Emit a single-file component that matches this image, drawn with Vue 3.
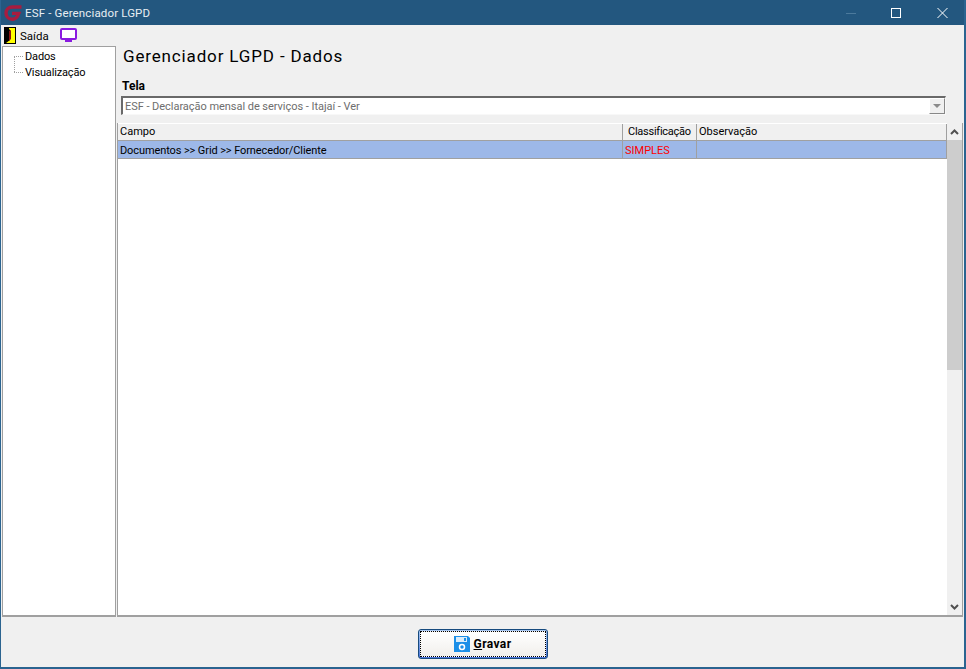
<script setup>
const tree = ['Dados', 'Visualização']
</script>

<template>
  <div class="window">
    <header class="titlebar">
      <svg class="logo" width="20" height="18" viewBox="0 0 20 18">
        <path d="M18.500 3H9.500C5.500 3 3 5.700 3 9s2.500 6.200 6.200 6.200c2.300 0 3.900-1 5-2.600l1.500-3.200H9" fill="none" stroke="#a81c3f" stroke-width="3.400"/>
      </svg>
      <span class="title">ESF - Gerenciador LGPD</span>
      <div class="controls">
        <svg width="136" height="25" viewBox="0 0 136 25">
          <path d="M16 13.500h10" stroke="#4c7a9c" fill="none"/>
          <rect x="61.500" y="8.500" width="9" height="9" stroke="#fff" fill="none"/>
          <path d="M107.500 8l10 10M117.500 8l-10 10" stroke="#fff" fill="none"/>
        </svg>
      </div>
    </header>

    <nav class="menubar">
      <svg width="12" height="17" viewBox="0 0 12 17">
        <rect width="12" height="17" fill="#000"/>
        <rect x="2" y="1" width="9" height="15" fill="#ffff00"/>
        <path d="M2 1h3v1l1 1v10l-4 3z" fill="#000"/>
        <path d="M5 4l2-1v9l-2 2z" fill="#8a1414"/>
      </svg>
      <span class="menu-label">Saída</span>
      <svg class="monitor" width="17" height="15" viewBox="0 0 17 15">
        <rect x="1" y="1" width="15" height="10" rx="1" fill="#fff" stroke="#8a1be0" stroke-width="2"/>
        <rect x="5" y="12" width="7" height="2" fill="#8a1be0"/>
      </svg>
    </nav>

    <div class="body">
      <aside class="tree">
        <div v-for="item in tree" :key="item" class="tree-item">{{ item }}</div>
      </aside>

      <main class="content">
        <h1 class="heading">Gerenciador LGPD - Dados</h1>
        <label class="field-label">Tela</label>
        <div class="combo">
          <span class="combo-text">ESF - Declaração mensal de serviços - Itajaí - Ver</span>
          <span class="combo-btn"><i class="combo-arrow"></i></span>
        </div>

        <div class="grid">
          <div class="grid-main">
            <div class="row head">
              <div class="cell c1">Campo</div>
              <div class="cell c2">Classificação</div>
              <div class="cell c3">Observação</div>
            </div>
            <div class="row selected">
              <div class="cell c1">Documentos &gt;&gt; Grid &gt;&gt; Fornecedor/Cliente</div>
              <div class="cell c2 red">SIMPLES</div>
              <div class="cell c3"></div>
            </div>
          </div>
          <div class="scrollbar">
            <div class="sb-btn">
              <svg width="9" height="6" viewBox="0 0 9 6"><path d="M1 5l3.500-3.500L8 5" fill="none" stroke="#505050" stroke-width="2"/></svg>
            </div>
            <div class="sb-thumb"></div>
            <div class="sb-track"></div>
            <div class="sb-btn">
              <svg width="9" height="6" viewBox="0 0 9 6"><path d="M1 1l3.500 3.500L8 1" fill="none" stroke="#505050" stroke-width="2"/></svg>
            </div>
          </div>
        </div>
      </main>
    </div>

    <footer class="footer">
      <button class="save" type="button">
        <span class="save-inner">
          <svg width="16" height="16" viewBox="0 0 16 16">
            <path d="M0 0h14l2 2v14H0z" fill="#1b8fe8"/>
            <rect x="2" y="1" width="11" height="5" fill="#d9ecfb"/>
            <rect x="10" y="2" width="2" height="3" fill="#1b8fe8"/>
            <circle cx="8" cy="11" r="2.500" fill="none" stroke="#fff" stroke-width="1.500"/>
          </svg>
          <span class="save-label"><u>G</u>ravar</span>
        </span>
      </button>
    </footer>
  </div>
</template>

<style>
html, body { margin: 0; background: #f0f0f0; }
</style>

<style scoped>
.window {
  width: 966px;
  height: 669px;
  box-sizing: border-box;
  display: flex;
  flex-direction: column;
  background: #f0f0f0;
  border: solid #2b6490;
  border-width: 0 2px 2px 1px;
  font-family: Roboto, "Liberation Sans", sans-serif;
  font-size: 11px;
  color: #000;
  overflow: hidden;
}
.titlebar {
  height: 25px;
  margin: 0 -2px 0 -1px;
  flex: none;
  display: flex;
  align-items: center;
  background: #23577f;
  color: #e8eef3;
  position: relative;
}
.logo { margin-left: 3px; }
.title { margin-left: 2px; font-size: 11.500px; letter-spacing: 0.14px; }
.controls { position: absolute; right: 0; top: 0; height: 25px; }
.controls svg { display: block; }
.menubar {
  height: 20px;
  flex: none;
  display: flex;
  align-items: center;
  padding-left: 3px;
}
.menu-label { margin-left: 4px; font-size: 11.500px; padding-top: 1px; }
.monitor { margin-left: 11px; }
.body {
  flex: none;
  height: 572px;
  display: flex;
  gap: 1px;
  padding: 1px 1px 0 1px;
  box-sizing: border-box;
}
.tree {
  width: 114px;
  box-sizing: border-box;
  flex: none;
  background: #fff;
  border: solid #a0a0a0;
  border-width: 1px 1px 2px 1px;
  padding-top: 2px;
  position: relative;
}
.tree-item {
  height: 16px;
  line-height: 15px;
  padding-left: 22px;
  position: relative;
  letter-spacing: -0.15px;
}
.tree-item::before {
  content: "";
  position: absolute;
  left: 11px;
  top: 7px;
  width: 9px;
  border-top: 1px dotted #a0a0a0;
}
.tree-item:last-child::after {
  content: "";
  position: absolute;
  left: 11px;
  top: -9px;
  height: 16px;
  border-left: 1px dotted #a0a0a0;
}
.content {
  flex: 1;
  min-width: 0;
  display: flex;
  flex-direction: column;
}
.heading {
  margin: 0 0 0 6px;
  height: 32px;
  box-sizing: border-box;
  font-size: 17px;
  line-height: 20px;
  font-weight: 400;
  letter-spacing: 0.85px;
}
.field-label {
  margin: 0 0 0 5px;
  height: 18px;
  font-weight: 700;
  font-size: 12px;
  line-height: 16px;
}
.combo {
  margin-left: 4px;
  width: 825px;
  height: 19px;
  box-sizing: border-box;
  display: flex;
  align-items: center;
  background: #fff;
  border: solid #696969;
  border-width: 2px 1px 1px 2px;
  border-color: #696969 #f8f8f8 #f8f8f8 #696969;
}
.combo-text {
  flex: 1;
  padding-left: 2px;
  color: #6d6d6d;
  letter-spacing: -0.04px;
}
.combo-btn {
  width: 16px;
  height: 16px;
  box-sizing: border-box;
  display: flex;
  align-items: center;
  justify-content: center;
  background: #f0f0f0;
  border: 1px solid;
  border-color: #fff #888 #888 #fff;
}
.combo-arrow {
  width: 0;
  height: 0;
  border-left: 4px solid transparent;
  border-right: 4px solid transparent;
  border-top: 4px solid #8a8a8a;
}
.grid {
  margin-top: 8px;
  width: 846px;
  height: 494px;
  box-sizing: border-box;
  flex: none;
  display: flex;
  background: #fff;
  border: solid #a0a0a0;
  border-width: 0 1px 2px 1px;
}
.grid-main { flex: 1; min-width: 0; }
.row { display: flex; }
.row.head {
  height: 18px;
  background: #f0f0f0;
  border-top: 1px solid #fff;
  box-sizing: border-box;
}
.row.selected {
  height: 18px;
  background: #9db8e8;
  border-bottom: 1px solid #a0a0a0;
  box-sizing: border-box;
}
.cell {
  box-sizing: border-box;
  border-right: 1px solid #a0a0a0;
  padding-left: 2px;
  line-height: 19px;
  white-space: nowrap;
  overflow: hidden;
}
.row.selected .c1 { letter-spacing: -0.1px; }
.c1 { width: 505px; }
.c2 { width: 74px; padding-left: 5px; }
.row.head .c2 { letter-spacing: -0.25px; }
.c2.red { padding-left: 2px; color: #ff0000; }
.c3 { flex: 1; }
.row.head .cell { border-bottom: 1px solid #a0a0a0; line-height: 16px; }
.scrollbar {
  width: 15px;
  flex: none;
  display: flex;
  flex-direction: column;
  background: #f0f0f0;
}
.sb-btn {
  height: 17px;
  flex: none;
  display: flex;
  align-items: center;
  justify-content: center;
}
.sb-thumb { height: 230px; flex: none; background: #cdcdcd; }
.sb-track { flex: 1; }
.footer {
  flex: 1;
  min-height: 0;
  display: flex;
  align-items: flex-start;
  justify-content: center;
  padding-top: 12px;
}
.save {
  width: 130px;
  height: 30px;
  box-sizing: border-box;
  padding: 1px;
  margin: 0;
  font: inherit;
  font-size: 12px;
  background: linear-gradient(#a9c8f2, #4f77dc);
  border: 1px solid #164a7e;
  border-radius: 3px;
}
.save-inner {
  height: 100%;
  display: flex;
  align-items: center;
  justify-content: center;
  gap: 4px;
  box-sizing: border-box;
  background: linear-gradient(#ffffff, #f1efec);
  border: 1px dotted #000;
}
.save-label { font-weight: 700; letter-spacing: 0.4px; }
</style>
